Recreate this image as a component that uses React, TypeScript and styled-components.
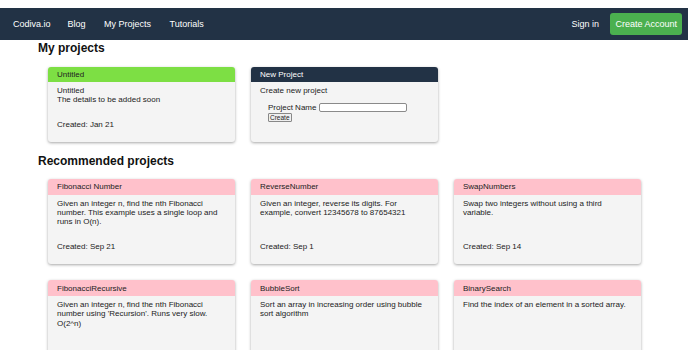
import { FC } from 'react';
import styled, { createGlobalStyle } from 'styled-components';

const GlobalStyle = createGlobalStyle`
  html, body {
    margin: 0;
    padding: 0;
    background: #ffffff;
  }
  body {
    font-family: "Liberation Sans", Arial, sans-serif;
    color: #222222;
    padding-top: 8px;
  }
`;

const NavBar = styled.nav`
  display: flex;
  align-items: center;
  height: 32px;
  padding: 0 6px 0 4px;
  background: #223245;
  font-size: 9px;
`;

const NavLink = styled.a<{ $brand?: boolean }>`
  color: #ffffff;
  text-decoration: none;
  padding: 0 ${(props) => (props.$brand ? '8px' : '9.5px')} 0 9px;
`;

const NavSpacer = styled.div`
  flex: 1;
`;

const SignUpButton = styled.a`
  display: flex;
  align-items: center;
  height: 22px;
  padding: 0 5px;
  margin-left: 2px;
  border-radius: 3px;
  background: #4bb04f;
  color: #ffffff;
  text-decoration: none;
`;

const Content = styled.main`
  padding: 1px 38px 0;
`;

const SectionTitle = styled.h2`
  margin: 0;
  font-size: 12px;
  line-height: 14px;
  font-weight: bold;
  color: #111111;
`;

const CardGrid = styled.div<{ $top: number; $bottom: number }>`
  display: grid;
  grid-template-columns: repeat(3, 187px);
  gap: 16px;
  padding: 0 10px;
  margin: ${(props) => props.$top}px 0 ${(props) => props.$bottom}px;
`;

const Card = styled.div`
  display: flex;
  flex-direction: column;
  background: #f4f4f4;
  border-radius: 3px;
  box-shadow: 0 1px 3px rgba(0, 0, 0, 0.35);
  overflow: hidden;
  font-size: 8px;
`;

type Tone = 'green' | 'dark' | 'pink';

const CardHeader = styled.div<{ $tone: Tone }>`
  height: ${(props) => (props.$tone === 'pink' ? 16 : 15)}px;
  display: flex;
  align-items: center;
  padding: 0 9px;
  background: ${(props) =>
    props.$tone === 'green' ? '#7ddf44' : props.$tone === 'dark' ? '#223245' : '#ffc1cb'};
  color: ${(props) => (props.$tone === 'dark' ? '#ffffff' : '#222222')};
`;

const CardBody = styled.div<{ $bottom: number }>`
  flex: 1;
  padding: 4px 9px ${(props) => props.$bottom}px;
  display: flex;
  flex-direction: column;
`;

const Description = styled.div<{ $minLines: number }>`
  min-height: ${(props) => props.$minLines * 9.3}px;
  line-height: 9.3px;
`;

const Created = styled.div`
  margin-top: auto;
  padding-top: 15px;
  min-height: 9.3px;
  line-height: 9.3px;
`;

const Form = styled.form`
  padding: 8px 0 0 8px;
`;

const FieldRow = styled.label`
  display: flex;
  align-items: center;
  gap: 3px;
`;

const NameInput = styled.input`
  width: 88px;
  height: 9px;
  box-sizing: border-box;
  padding: 0;
  border: 1px solid #8a8a8a;
  border-radius: 2px;
  background: #ffffff;
`;

const SmallButton = styled.button`
  display: block;
  margin-top: 1px;
  padding: 0 1px;
  height: 9px;
  font-family: inherit;
  font-size: 6.5px;
  line-height: 7px;
  color: #222222;
  background: #efefef;
  border: 1px solid #888888;
  border-radius: 1px;
`;

type Project = {
  title: string;
  lines: string[];
  created?: string;
};

// the last row runs off the bottom of the screen, so their dates aren't shown
const recommended: Project[] = [
  {
    title: 'Fibonacci Number',
    lines: ['Given an integer n, find the nth Fibonacci number. This example uses a single loop and runs in O(n).'],
    created: 'Sep 21',
  },
  {
    title: 'ReverseNumber',
    lines: ['Given an integer, reverse its digits. For example, convert 12345678 to 87654321'],
    created: 'Sep 1',
  },
  {
    title: 'SwapNumbers',
    lines: ['Swap two integers without using a third variable.'],
    created: 'Sep 14',
  },
  {
    title: 'FibonacciRecursive',
    lines: ["Given an integer n, find the nth Fibonacci number using 'Recursion'. Runs very slow. O(2^n)"],
  },
  {
    title: 'BubbleSort',
    lines: ['Sort an array in increasing order using bubble sort algorithm'],
  },
  {
    title: 'BinarySearch',
    lines: ['Find the index of an element in a sorted array.'],
  },
];

const ProjectCard: FC<{ project: Project; tone: Tone; minLines: number; bottom: number }> = ({
  project,
  tone,
  minLines,
  bottom,
}) => (
  <Card>
    <CardHeader $tone={tone}>{project.title}</CardHeader>
    <CardBody $bottom={bottom}>
      <Description $minLines={minLines}>
        {project.lines.map((line) => (
          <div key={line}>{line}</div>
        ))}
      </Description>
      <Created>{project.created ? `Created: ${project.created}` : null}</Created>
    </CardBody>
  </Card>
);

const NewProjectCard: FC = () => (
  <Card>
    <CardHeader $tone="dark">New Project</CardHeader>
    <CardBody $bottom={12}>
      <div>Create new project</div>
      <Form onSubmit={(e) => e.preventDefault()}>
        <FieldRow>
          Project Name
          <NameInput type="text" />
        </FieldRow>
        <SmallButton type="submit">Create</SmallButton>
      </Form>
    </CardBody>
  </Card>
);

const App: FC = () => (
  <>
    <GlobalStyle />
    <NavBar>
      <NavLink $brand href="#">Codiva.io</NavLink>
      <NavLink href="#">Blog</NavLink>
      <NavLink href="#">My Projects</NavLink>
      <NavLink href="#">Tutorials</NavLink>
      <NavSpacer />
      <NavLink href="#">Sign in</NavLink>
      <SignUpButton href="#">Create Account</SignUpButton>
    </NavBar>
    <Content>
      <SectionTitle>My projects</SectionTitle>
      <CardGrid $top={12} $bottom={12}>
        <ProjectCard
          tone="green"
          minLines={2}
          bottom={13}
          project={{ title: 'Untitled', lines: ['Untitled', 'The details to be added soon'], created: 'Jan 21' }}
        />
        <NewProjectCard />
      </CardGrid>
      <SectionTitle>Recommended projects</SectionTitle>
      <CardGrid $top={11} $bottom={20}>
        {recommended.map((p) => (
          <ProjectCard key={p.title} project={p} tone="pink" minLines={3} bottom={13} />
        ))}
      </CardGrid>
    </Content>
  </>
);

export default App;
